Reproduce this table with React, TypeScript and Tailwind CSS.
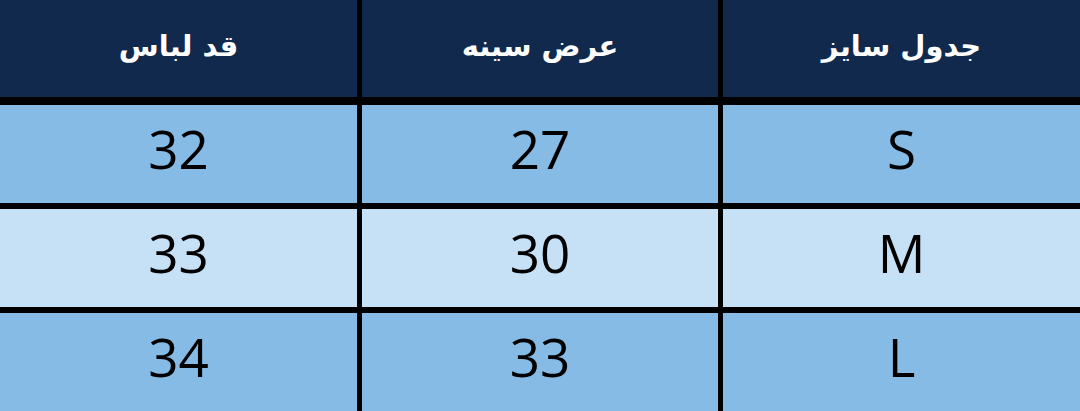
import React from 'react';

const headers = ['جدول سایز', 'عرض سینه', 'قد لباس'];

const rows = [
  { size: 'S', chest: '27', length: '32', bg: 'bg-[#86bbe6]' },
  { size: 'M', chest: '30', length: '33', bg: 'bg-[#c6e0f5]' },
  { size: 'L', chest: '33', length: '34', bg: 'bg-[#86bbe6]' },
];

const App: React.FC = () => {
  return (
    <div dir="rtl" className="w-[1080px] h-[411px] bg-black flex flex-col">
      <div className="grid grid-cols-[357px_356px_357px] gap-x-[5px] h-[97px] mb-[8px]">
        {headers.map((h) => (
          <div
            key={h}
            className="bg-[#10294d] flex items-center justify-center text-white font-bold text-[29px] font-['DejaVu_Sans',sans-serif] pb-[4px]"
          >
            {h}
          </div>
        ))}
      </div>
      {rows.map((r, i) => (
        <div
          key={r.size}
          className={
            'grid grid-cols-[357px_356px_357px] gap-x-[5px] h-[98px] ' +
            (i < rows.length - 1 ? 'mb-[6px]' : '')
          }
        >
          {[r.size, r.chest, r.length].map((v, j) => (
            <div
              key={j}
              dir="ltr"
              className={`${r.bg} flex items-center justify-center text-black text-[53px] font-['Open_Sans',sans-serif] pb-[10px]`}
            >
              {v}
            </div>
          ))}
        </div>
      ))}
    </div>
  );
};

export default App;
